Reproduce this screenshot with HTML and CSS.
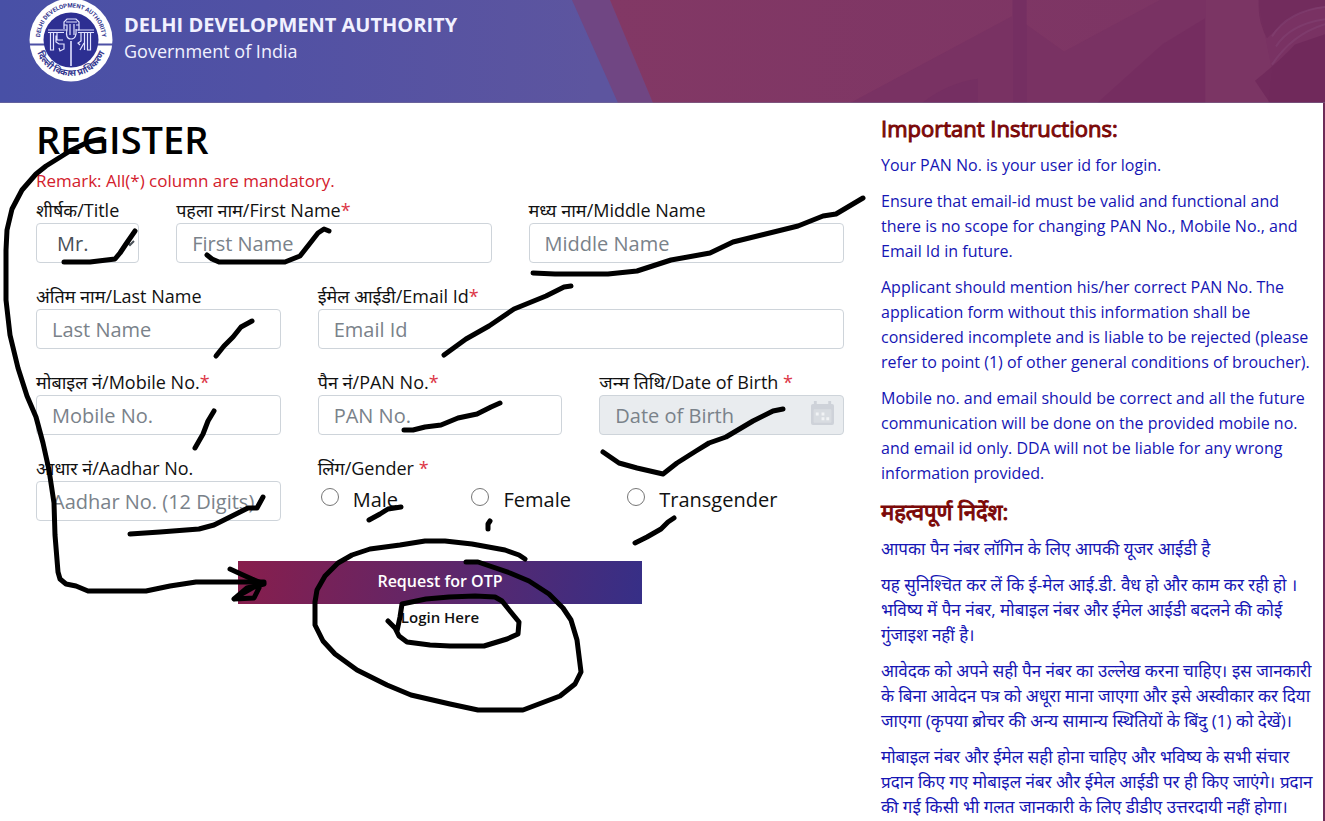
FILE: index.html
```html
<!DOCTYPE html>
<html lang="en">
<head>
<meta charset="utf-8">
<meta name="viewport" content="width=device-width, initial-scale=1">
<title>Register - Delhi Development Authority</title>
<link rel="stylesheet" href="styles.css">
</head>
<body>
<div class="page">
<header class="banner">
  <svg class="banner-art" viewBox="0 0 1325 102" preserveAspectRatio="none" aria-hidden="true">
    <defs>
      <linearGradient id="sky" x1="0" x2="1"><stop offset="0" stop-color="#4850a6"/><stop offset=".4" stop-color="#5151a4"/><stop offset=".9" stop-color="#5d559f"/></linearGradient>
      <linearGradient id="wine" x1="0" x2="1"><stop offset="0" stop-color="#823865"/><stop offset="1" stop-color="#7b3464"/></linearGradient>
    </defs>
    <path fill="url(#sky)" d="M0 0h660v102H0z"/>
    <path fill="#704683" d="M572 0h45l43 102h-42z"/>
    <path fill="url(#wine)" d="M610 0h715v102H653z"/>
    <path fill="#793263" d="M850 102L1012 16v-16h14v24l38 27 96-51h165v102z"/>
    <path fill="#722b62" d="M922 102q26-20 56-24v24zM1013 0h14v102h-14z" opacity=".5"/>
    <path fill="#70295e" d="M1097 102l65-58 43-26v84z" opacity=".45"/>
    <path fill="#7f3966" d="M1206 0h52l14 70-4 32h-62z" opacity=".45"/>
    <path fill="#6b2558" d="M1255 80q25-20 40-36l30-10v68h-55z" opacity=".65"/>
    <path fill="#6b2558" d="M1259 0h66v6q-30 3-58 32-10-18-8-38z" opacity=".5"/>
    <path fill="none" stroke="#864677" stroke-width="2" opacity=".45" d="M1272 36q16-25 53-29M1276 46q14-22 49-27M1272 64q20-30 53-40"/>
    <path fill="#7c7296" d="M0 101h1325v1H0z" opacity=".5"/>
  </svg>
  <svg class="emblem" viewBox="0 0 84 84" role="img" aria-label="Delhi Development Authority emblem">
    <defs>
      <path id="arc-top" d="M11.500 46a31 31 0 1 1 61 0"/>
      <path id="arc-bottom" d="M6 42a36 36 0 0 0 72 0"/>
    </defs>
    <circle cx="42" cy="42" r="41.500" fill="#fff"/>
    <circle cx="42" cy="42" r="27.500" fill="#2d2f92"/>
    <path d="M0 46.500h15M69 46.500h15" stroke="#4d51a5" stroke-width="2"/>
    <text class="emblem-en"><textPath href="#arc-top" startOffset="50%" text-anchor="middle">DELHI DEVELOPMENT AUTHORITY</textPath></text>
    <text class="emblem-hi"><textPath href="#arc-bottom" startOffset="50%" text-anchor="middle">दिल्ली विकास प्राधिकरण</textPath></text>
    <g fill="none" stroke="#e2e3ff" stroke-width="1.200">
      <path d="M19 32h16M19 34.500h16M21.500 34v18h3V35M28 35v7h6M28 38h-1v6l3 2h5v5l-4 2-1-3"/>
      <path d="M35 31v-7l3-3h9l3 3v7M37 24h11M35 27h3v5h-3M47 27h3v5h-3M38 31q-2 10 4 10t5-10M41 26v11M45 26v11"/>
      <path d="M49 32h16M49 34.500h16M52 35v8l-3 2 2 2M55.500 35v17M58.500 35v17h3V35M51 52l4-7"/>
      <path d="M42 43v25" stroke-width="1.600"/>
    </g>
  </svg>
  <div class="brand">
    <strong class="brand-name">DELHI DEVELOPMENT AUTHORITY</strong>
    <span class="brand-sub">Government of India</span>
  </div>
</header>

<div class="content">
<main>
  <h1 class="title">REGISTER</h1>
  <p class="remark">Remark: All(*) column are mandatory.</p>
  <form class="form">
    <div class="row row-name">
      <div class="field"><label for="title">शीर्षक/Title</label><select id="title" class="control select"><option>Mr.</option><option>Mrs.</option><option>Ms.</option></select></div>
      <div class="field"><label for="first">पहला नाम/First Name<span class="req">*</span></label><input id="first" class="control" type="text" placeholder="First Name"></div>
      <div class="field"><label for="middle">मध्य नाम/Middle Name</label><input id="middle" class="control" type="text" placeholder="Middle Name"></div>
    </div>
    <div class="row row-thirds">
      <div class="field"><label for="last">अंतिम नाम/Last Name</label><input id="last" class="control" type="text" placeholder="Last Name"></div>
      <div class="field wide"><label for="email">ईमेल आईडी/Email Id<span class="req">*</span></label><input id="email" class="control" type="email" placeholder="Email Id"></div>
    </div>
    <div class="row row-thirds">
      <div class="field"><label for="mobile">मोबाइल नं/Mobile No.<span class="req">*</span></label><input id="mobile" class="control" type="tel" placeholder="Mobile No."></div>
      <div class="field"><label for="pan">पैन नं/PAN No.<span class="req">*</span></label><input id="pan" class="control" type="text" placeholder="PAN No."></div>
      <div class="field"><label for="dob">जन्म तिथि/Date of Birth <span class="req">*</span></label>
        <div class="date">
          <input id="dob" class="control" type="text" placeholder="Date of Birth" disabled>
          <svg class="calendar" viewBox="0 0 24 26" aria-hidden="true"><path fill="#ced2d9" fill-rule="evenodd" d="M3 3V0h3v3h12V0h3v3h1q2 0 2 2v18q0 2-2 2H2q-2 0-2-2V5q0-2 2-2zM3 9v13h18V9z"/><path fill="#d8dce1" d="M3 9h18v13H3z"/><path fill="#f1f3f5" d="M5 12h3v3H5zM11 12h3v3h-3zM11 17h3v3h-3zM16 17h3v3h-3z"/></svg>
        </div>
      </div>
    </div>
    <div class="row row-thirds">
      <div class="field"><label for="aadhar">आधार नं/Aadhar No.</label><input id="aadhar" class="control" type="text" placeholder="Aadhar No. (12 Digits)"></div>
      <fieldset class="field wide">
        <legend>लिंग/Gender <span class="req">*</span></legend>
        <div class="radios">
          <label class="radio"><input type="radio" name="gender">Male</label>
          <label class="radio"><input type="radio" name="gender">Female</label>
          <label class="radio"><input type="radio" name="gender">Transgender</label>
        </div>
      </fieldset>
    </div>
    <div class="actions">
      <button class="otp" type="button">Request for OTP</button>
      <a class="login" href="#">Login Here</a>
    </div>
  </form>
</main>

<aside class="notes">
  <h2>Important Instructions:</h2>
  <p>Your PAN No. is your user id for login.</p>
  <p>Ensure that email-id must be valid and functional and there is no scope for changing PAN No., Mobile No., and Email Id in future.</p>
  <p>Applicant should mention his/her correct PAN No. The application form without this information shall be considered incomplete and is liable to be rejected (please refer to point (1) of other general conditions of broucher).</p>
  <p>Mobile no. and email should be correct and all the future communication will be done on the provided mobile no. and email id only. DDA will not be liable for any wrong information provided.</p>
  <div class="notes-hi" lang="hi">
    <h2>महत्वपूर्ण निर्देश:</h2>
    <p>आपका पैन नंबर लॉगिन के लिए आपकी यूजर आईडी है</p>
    <p>यह सुनिश्चित कर लें कि ई-मेल आई.डी. वैध हो और काम कर रही हो ।<br>भविष्य में पैन नंबर, मोबाइल नंबर और ईमेल आईडी बदलने की कोई<br>गुंजाइश नहीं है।</p>
    <p>आवेदक को अपने सही पैन नंबर का उल्लेख करना चाहिए। इस जानकारी<br>के बिना आवेदन पत्र को अधूरा माना जाएगा और इसे अस्वीकार कर दिया<br>जाएगा (कृपया ब्रोचर की अन्य सामान्य स्थितियों के बिंदु (1) को देखें)।</p>
    <p>मोबाइल नंबर और ईमेल सही होना चाहिए और भविष्य के सभी संचार<br>प्रदान किए गए मोबाइल नंबर और ईमेल आईडी पर ही किए जाएंगे। प्रदान<br>की गई किसी भी गलत जानकारी के लिए डीडीए उत्तरदायी नहीं होगा।</p>
  </div>
</aside>
</div>

<svg class="ink" viewBox="0 0 1325 821" aria-hidden="true">
  <path d="M102 139L88 142 70 151 46 166 36 174 22 190 12 209 7 230 6 250 6 300 10 335 18 368 27 396 36 417 43 443 49 470 54 503 55 535 58 572 60 579 66 584 76 586 88 591H146L170 586 196 582H240L264 582"/>
  <path d="M230 569L243 575 252 579 264 584 247 588 234 599M234 599L254 598 259 588M238 596L256 586"/>
  <path d="M64 262H90L115 259 120 253 126 244 135 231"/>
  <path d="M207 255L212 259 219 262H285L300 256 311 242 318 233 324 229 329 231"/>
  <path d="M533 273L555 274H608L637 271 671 260 710 253 733 242 798 226 823 216 836 214 863 198"/>
  <path d="M444 355L466 339 489 326 514 309 546 296 564 287 571 286"/>
  <path d="M216 356L224 346 233 337 241 327 252 321"/>
  <path d="M195 448L203 434 208 421 214 411"/>
  <path d="M404 430H413L425 427 441 425 458 418 477 414 491 407 500 403"/>
  <path d="M603 452L619 463 637 468 663 474 677 463 696 451 709 443 726 437 753 421 773 411 783 409"/>
  <path d="M130 534L160 532 199 529 214 525 248 508H257L263 497"/>
  <path d="M369 520L380 514 388 509 401 507"/>
  <path d="M490 521L488 524V529"/>
  <path d="M635 543L647 537 661 529 668 522 674 518"/>
  <path d="M525 559L519 555 505 550 472 544 445 541H425L400 545 370 549 352 555 338 563 325 576 317 590 315 602V625L323 641 335 654 357 670 387 685 411 695 450 704 478 710H523L560 696 575 684 581 672 577 640 571 620 563 608 549 594 529 581 510 573 478 562H466"/>
  <path d="M388 621L395 628 399 636 407 642 430 645 450 646H484L507 639 518 634 519 622 510 611 502 601 495 597 475 596 449 597 426 599 402 604 400 617 397 631"/>
</svg>
</div>
</body>
</html>
```
FILE: styles.css
```css
* { box-sizing: border-box; }

body {
  margin: 0;
  background: #fff;
  color: #111;
  font-family: "Open Sans", "Noto Sans", sans-serif;
  font-size: 16px;
  line-height: 25px;
}

.page { position: relative; display: flex; flex-direction: column; min-height: 100vh; overflow: hidden; }

.banner {
  position: relative;
  display: flex;
  align-items: flex-start;
  gap: 11px;
  height: 103px;
  padding-left: 29px;
}
.banner-art { position: absolute; inset: 0; width: 100%; height: 100%; }
.emblem { position: relative; flex: none; width: 84px; height: 84px; margin-top: -2px; overflow: visible; }
.emblem-en { font: bold 6px Roboto, sans-serif; fill: #34378f; }
.emblem-hi { font: bold 9px "Noto Sans", sans-serif; fill: #34378f; }
.brand {
  position: relative;
  display: flex;
  flex-direction: column;
  padding-top: 12px;
  color: #f1f1ff;
  line-height: 26px;
}
.brand-name { font-size: 20px; font-weight: 700; }
.brand-sub { font-size: 18px; }

.content {
  display: grid;
  flex: 1;
  grid-template-columns: 808fr 442fr;
  gap: 37px;
  padding-left: 36px;
  border-right: 2px solid #6e2c58;
}

.title { margin: 12px 0 0; color: #000; font-size: 38px; font-weight: 600; line-height: 48px; }
.remark { margin: 6px 0 4px; color: #d3202c; font-size: 17px; line-height: 24px; }

.form { display: flex; flex-direction: column; gap: 20px; }
.row { display: grid; column-gap: 37px; }
.row-name { grid-template-columns: 103fr 315fr 315fr; }
.row-thirds { grid-template-columns: 1fr 1fr 1fr; }
.wide { grid-column: span 2; }
.field { display: flex; flex-direction: column; min-width: 0; margin: 0; padding: 0; border: 0; }
.field > label, legend { height: 26px; padding: 0; font-size: 18px; line-height: 26px; white-space: nowrap; }
.req { color: #dc3545; }

.control {
  width: 100%;
  height: 40px;
  padding: 0 15px;
  border: 1px solid #ced4da;
  border-radius: 4px;
  background: #fff;
  color: #495057;
  font: inherit;
  font-size: 20px;
}
.control::placeholder { color: #7a828a; opacity: 1; }
.control:disabled { background: #e9ecef; }
.select { padding-left: 16px; }

.date { position: relative; }
.calendar { position: absolute; top: 6px; right: 10px; width: 23px; height: 25px; }

.radios { display: grid; grid-template-columns: 151fr 156fr 220fr; height: 36px; align-items: center; font-size: 20px; }
.radio { display: flex; align-items: center; gap: 14px; }
.radio input { width: 18px; height: 18px; margin: 0 0 4px 3px; }

.actions { display: flex; flex-direction: column; align-items: center; padding-top: 20px; }
.otp {
  width: 50%;
  height: 43px;
  padding: 0 0 4px;
  border: 0;
  background: linear-gradient(100deg, #881e4c, #362f87);
  color: #fff;
  font: 600 16px "Open Sans", sans-serif;
}
.login { color: #111; font-size: 15px; font-weight: 600; line-height: 27px; text-decoration: none; }

.notes { min-width: 0; padding: 13px 0 3px; color: #1515b4; }
.notes h2 {
  margin: 0 0 12px;
  color: #7b0808;
  font-size: 22px;
  font-weight: 400;
  line-height: 25px;
  -webkit-text-stroke: 1px #7b0808;
}
.notes p { margin: 0 0 11px; }
.notes-hi { padding-top: 2px; font-size: 17px; white-space: nowrap; }

.ink {
  position: absolute;
  top: 0;
  left: 0;
  width: 1325px;
  height: 821px;
  fill: none;
  stroke: #000;
  stroke-width: 5;
  stroke-linecap: round;
  stroke-linejoin: round;
  pointer-events: none;
}
```
